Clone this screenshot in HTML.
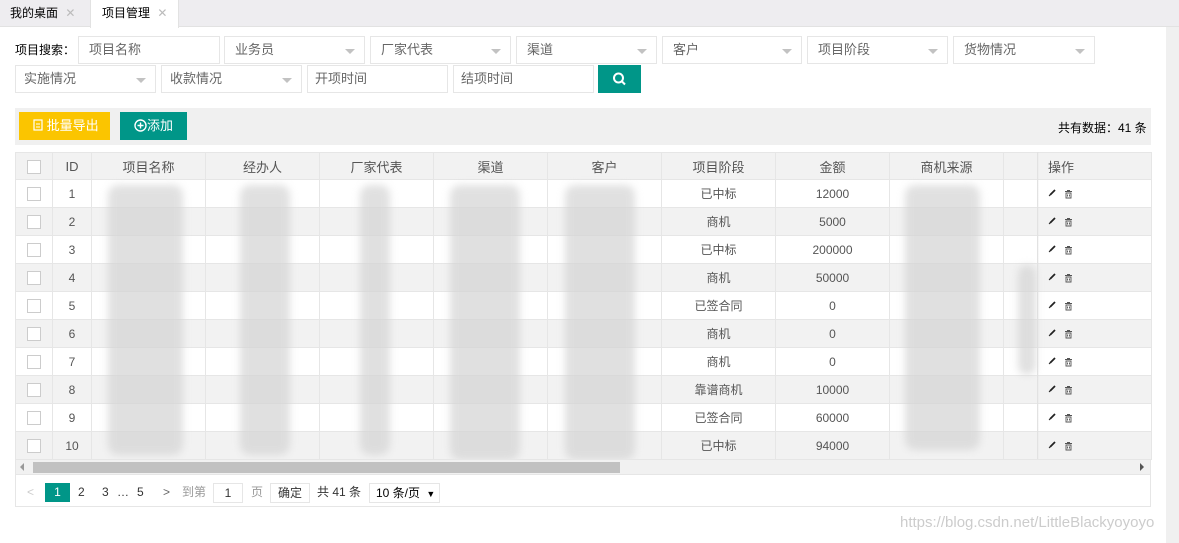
<!DOCTYPE html>
<html><head><meta charset="utf-8"><style>
*{box-sizing:border-box;margin:0;padding:0}
body{width:1179px;height:543px;background:#fff;font-family:"Liberation Sans","Noto Sans CJK SC",sans-serif;font-size:12px;color:#333;position:relative;overflow:hidden}
.a{position:absolute}
.tabs{left:0;top:0;width:1179px;height:27px;background:#eeedf0;border-bottom:1px solid #e2e2e2}
.tab{top:0;height:27px;line-height:26px;font-size:12px;color:#000}
.inp{height:28px;border:1px solid #e6e6e6;background:#fff;color:#666;line-height:26px;padding-left:10px;font-size:13px}
.inp .tri{position:absolute;right:9px;top:12px;border:5px solid transparent;border-top:5px solid #c2c2c2}
table{border-collapse:collapse;table-layout:fixed;position:absolute;left:15px;top:152px}
td{border:1px solid #e6e6e6;height:28px;text-align:center;font-size:12px;color:#555;overflow:hidden;white-space:nowrap}
tr.h td{background:#f2f2f2;height:27px;color:#555;font-size:13px}
tr:nth-child(odd):not(.h) td{background:#f2f2f2}
.cb{display:inline-block;width:14px;height:14px;border:1px solid #ccc;background:#fff;vertical-align:middle}
.blur{position:absolute;background:#d4d4d4;filter:blur(4px);opacity:.7;border-radius:10px}
.pg{top:483px;height:19px;line-height:19px;font-size:12px;color:#333}
</style></head><body>
<div class="a tabs"></div>
<div class="a tab" style="left:0;width:90px;padding-left:10px">我的桌面 <span style="color:#bbb;margin-left:4px">✕</span></div>
<div class="a tab" style="left:90px;width:89px;background:#fff;height:28px;padding-left:11px;border-left:1px solid #e2e2e2;border-right:1px solid #e2e2e2">项目管理 <span style="color:#bbb;margin-left:4px">✕</span></div>

<div class="a" style="left:15px;top:41px;font-size:12px;color:#000">项目搜索：</div>
<div class="a inp" style="left:78px;top:36px;width:142px">项目名称</div>
<div class="a inp" style="left:224px;top:36px;width:141px">业务员<i class="tri"></i></div>
<div class="a inp" style="left:370px;top:36px;width:141px">厂家代表<i class="tri"></i></div>
<div class="a inp" style="left:516px;top:36px;width:141px">渠道<i class="tri"></i></div>
<div class="a inp" style="left:662px;top:36px;width:140px">客户<i class="tri"></i></div>
<div class="a inp" style="left:807px;top:36px;width:141px">项目阶段<i class="tri"></i></div>
<div class="a inp" style="left:953px;top:36px;width:142px">货物情况<i class="tri"></i></div>
<div class="a inp" style="left:15px;top:65px;width:141px;padding-left:8px">实施情况<i class="tri"></i></div>
<div class="a inp" style="left:161px;top:65px;width:141px;padding-left:8px">收款情况<i class="tri"></i></div>
<div class="a inp" style="left:307px;top:65px;width:141px;padding-left:7px">开项时间</div>
<div class="a inp" style="left:453px;top:65px;width:141px;padding-left:7px">结项时间</div>
<div class="a" style="left:598px;top:65px;width:43px;height:28px;background:#009688">
<svg width="43" height="28"><circle cx="20.5" cy="13" r="4.5" stroke="#fff" stroke-width="2" fill="none"/><line x1="24" y1="16.5" x2="27" y2="19.5" stroke="#fff" stroke-width="2"/></svg></div>

<div class="a" style="left:15px;top:108px;width:1136px;height:37px;background:#f0f0f0"></div>
<div class="a" style="left:19px;top:112px;width:91px;height:28px;background:#fbc500;color:#fff;font-size:13px;line-height:28px;padding-left:14px"><svg width="10" height="12" style="vertical-align:-1px"><rect x="1" y="1" width="8" height="10" fill="none" stroke="#fff" stroke-width="1.2"/><line x1="3" y1="5" x2="7" y2="5" stroke="#fff"/><line x1="3" y1="8" x2="7" y2="8" stroke="#fff"/></svg> 批量导出</div>
<div class="a" style="left:120px;top:112px;width:67px;height:28px;background:#009688;color:#fff;font-size:13px;line-height:28px;padding-left:14px"><svg width="13" height="13" style="vertical-align:-2px"><circle cx="6.5" cy="6.5" r="5.5" fill="none" stroke="#fff" stroke-width="1.4"/><path d="M6.5 3.5v6M3.5 6.5h6" stroke="#fff" stroke-width="1.4"/></svg>添加</div>
<div class="a" style="left:1058px;top:119px;color:#000;font-size:12px">共有数据：41 条</div>

<table>
<colgroup><col style="width:37px"><col style="width:39px"><col style="width:114px"><col style="width:114px"><col style="width:114px"><col style="width:114px"><col style="width:114px"><col style="width:114px"><col style="width:114px"><col style="width:114px"><col style="width:34px"><col style="width:114px"></colgroup>
<tr class="h"><td><i class="cb"></i></td><td>ID</td><td>项目名称</td><td>经办人</td><td>厂家代表</td><td>渠道</td><td>客户</td><td>项目阶段</td><td>金额</td><td>商机来源</td><td></td><td style="text-align:left;padding-left:10px">操作</td></tr>
<tr><td><i class="cb"></i></td><td>1</td><td></td><td></td><td></td><td></td><td></td><td>已中标</td><td>12000</td><td></td><td></td><td></td></tr>
<tr><td><i class="cb"></i></td><td>2</td><td></td><td></td><td></td><td></td><td></td><td>商机</td><td>5000</td><td></td><td></td><td></td></tr>
<tr><td><i class="cb"></i></td><td>3</td><td></td><td></td><td></td><td></td><td></td><td>已中标</td><td>200000</td><td></td><td></td><td></td></tr>
<tr><td><i class="cb"></i></td><td>4</td><td></td><td></td><td></td><td></td><td></td><td>商机</td><td>50000</td><td></td><td></td><td></td></tr>
<tr><td><i class="cb"></i></td><td>5</td><td></td><td></td><td></td><td></td><td></td><td>已签合同</td><td>0</td><td></td><td></td><td></td></tr>
<tr><td><i class="cb"></i></td><td>6</td><td></td><td></td><td></td><td></td><td></td><td>商机</td><td>0</td><td></td><td></td><td></td></tr>
<tr><td><i class="cb"></i></td><td>7</td><td></td><td></td><td></td><td></td><td></td><td>商机</td><td>0</td><td></td><td></td><td></td></tr>
<tr><td><i class="cb"></i></td><td>8</td><td></td><td></td><td></td><td></td><td></td><td>靠谱商机</td><td>10000</td><td></td><td></td><td></td></tr>
<tr><td><i class="cb"></i></td><td>9</td><td></td><td></td><td></td><td></td><td></td><td>已签合同</td><td>60000</td><td></td><td></td><td></td></tr>
<tr><td><i class="cb"></i></td><td>10</td><td></td><td></td><td></td><td></td><td></td><td>已中标</td><td>94000</td><td></td><td></td><td></td></tr>
</table>
<div class="blur" style="left:108px;top:185px;width:75px;height:270px"></div>
<div class="blur" style="left:240px;top:185px;width:50px;height:270px"></div>
<div class="blur" style="left:360px;top:185px;width:30px;height:270px"></div>
<div class="blur" style="left:450px;top:185px;width:70px;height:275px"></div>
<div class="blur" style="left:565px;top:185px;width:70px;height:275px"></div>
<div class="blur" style="left:905px;top:185px;width:75px;height:265px"></div>
<div class="blur" style="left:1018px;top:265px;width:18px;height:110px"></div>
<div class="a" style="left:1037px;top:152px;width:2px;height:307px;background:linear-gradient(90deg,#e0e0e0,transparent)"></div>
<svg class="a" style="left:1045px;top:183px" width="40" height="280">
<defs><g id="ic"><path d="M5 12 L10 7" stroke="#222" stroke-width="1.8"/><path d="M4 13 L5 12" stroke="#222" stroke-width="1"/><path d="M20 8.5h7M21 10h5v5h-5zM22.5 11.5v2M24.5 11.5v2M22 7.5h3" stroke="#555" stroke-width="0.9" fill="none"/></g></defs>
<use href="#ic" y="0"/><use href="#ic" y="28"/><use href="#ic" y="56"/><use href="#ic" y="84"/><use href="#ic" y="112"/><use href="#ic" y="140"/><use href="#ic" y="168"/><use href="#ic" y="196"/><use href="#ic" y="224"/><use href="#ic" y="252"/>
</svg>

<div class="a" style="left:15px;top:459px;width:1136px;height:16px;background:#f1f1f1;border:1px solid #e6e6e6"></div>
<div class="a" style="left:33px;top:462px;width:587px;height:11px;background:#c1c1c1"></div>
<div class="a" style="left:20px;top:463px;border:4px solid transparent;border-right:4px solid #999;border-left:0"></div>
<div class="a" style="left:1140px;top:463px;border:4px solid transparent;border-left:4px solid #555;border-right:0"></div>
<div class="a" style="left:15px;top:475px;width:1136px;height:32px;border:1px solid #e6e6e6;border-top:none"></div>
<div class="a pg" style="left:27px;color:#ccc">&lt;</div>
<div class="a pg" style="left:45px;width:25px;background:#009688;color:#fff;text-align:center;top:483px;height:19px">1</div>
<div class="a pg" style="left:78px">2</div>
<div class="a pg" style="left:102px">3</div>
<div class="a pg" style="left:117px">…</div>
<div class="a pg" style="left:137px">5</div>
<div class="a pg" style="left:163px;color:#666">&gt;</div>
<div class="a pg" style="left:182px;color:#999">到第</div>
<div class="a pg" style="left:213px;width:30px;height:20px;border:1px solid #e6e6e6;text-align:center">1</div>
<div class="a pg" style="left:251px;color:#999">页</div>
<div class="a pg" style="left:270px;width:40px;height:20px;border:1px solid #e6e6e6;text-align:center">确定</div>
<div class="a pg" style="left:317px">共 41 条</div>
<div class="a pg" style="left:369px;width:71px;height:20px;border:1px solid #e6e6e6;padding-left:6px;color:#000">10 条/页 <span style="font-size:9px;margin-left:3px">▼</span></div>
<div class="a" style="left:1166px;top:27px;width:13px;height:516px;background:#f0f0f0"></div>
<div class="a" style="left:900px;top:514px;color:#ccc;font-size:15px;white-space:nowrap">https://blog.csdn.net/LittleBlackyoyoyo</div>
</body></html>
